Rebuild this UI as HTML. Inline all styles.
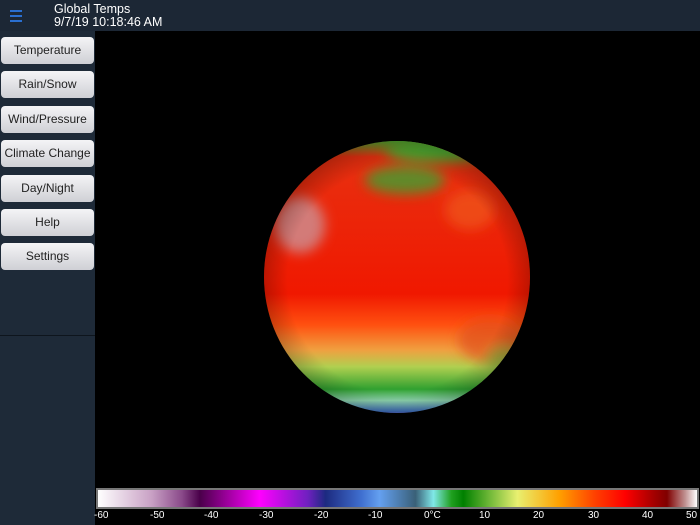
<!DOCTYPE html>
<html><head><style>
*{margin:0;padding:0;box-sizing:border-box}
body{width:700px;height:525px;background:#000;position:relative;overflow:hidden;font-family:"Liberation Sans",sans-serif}
#hdr{position:absolute;left:0;top:0;width:700px;height:31px;background:#1c2735}
#hdr .t{position:absolute;left:54px;color:#fff;font-size:12.5px;line-height:13px}
#side{position:absolute;left:0;top:31px;width:95px;height:494px;background:#1e2a38}
#side .ln{position:absolute;left:0;top:304px;width:95px;height:1px;background:#0e151d}
.b{position:absolute;left:1px;width:93px;height:27px;border-radius:4px;background:linear-gradient(#f4f4f6,#cfd0d5);color:#222;font-size:12px;text-align:center;line-height:27px;white-space:nowrap}
.ham{position:absolute;left:10px;width:12px;height:1.5px;background:#2a6fd0}
#bar{position:absolute;left:96px;top:488px;width:603px;height:21px;border:2px solid #777;background:linear-gradient(90deg,#fff 0%,#c8a0c4 9%,#8a4a8a 14%,#4a004a 17%,#ff00ff 27%,#7020c0 35%,#1c2a80 38%,#4070d0 44%,#64a0f0 47%,#3a6078 53%,#80e8e8 56%,#20a020 59%,#008000 61%,#80c040 66%,#e8f070 70%,#ffa000 77%,#ff4000 83%,#ff0000 88%,#a00000 93%,#800000 95%,#c09090 98%,#fff 100%)}
.l{position:absolute;top:510px;color:#fff;font-size:10px}
</style></head><body>
<div id="hdr">
<div class="ham" style="top:10px"></div><div class="ham" style="top:15px"></div><div class="ham" style="top:20px"></div>
<div class="t" style="top:3px">Global Temps</div>
<div class="t" style="top:16px">9/7/19 10:18:46 AM</div>
</div>
<div id="side"><div class="ln"></div></div>
<div class="b" style="top:37px">Temperature</div>
<div class="b" style="top:71px">Rain/Snow</div>
<div class="b" style="top:106px">Wind/Pressure</div>
<div class="b" style="top:140px">Climate Change</div>
<div class="b" style="top:175px">Day/Night</div>
<div class="b" style="top:209px">Help</div>
<div class="b" style="top:243px">Settings</div>
<svg style="position:absolute;left:0;top:0" width="700" height="525">
<defs>
<clipPath id="c"><ellipse cx="397" cy="277" rx="133" ry="136"/></clipPath>
<filter id="bl"><feGaussianBlur stdDeviation="6"/></filter>
<linearGradient id="v" x1="0" y1="0" x2="0" y2="1">
<stop offset="0" stop-color="#50b030"/><stop offset="0.06" stop-color="#e83010"/>
<stop offset="0.55" stop-color="#f01800"/><stop offset="0.66" stop-color="#ff5010"/>
<stop offset="0.75" stop-color="#f0a040"/><stop offset="0.81" stop-color="#b0d050"/>
<stop offset="0.89" stop-color="#30a030"/><stop offset="0.93" stop-color="#90d8b0"/>
<stop offset="0.97" stop-color="#4070c0"/><stop offset="1" stop-color="#b030c0"/>
</linearGradient>
<radialGradient id="s" cx="0.5" cy="0.5" r="0.5"><stop offset="0.8" stop-color="#000" stop-opacity="0"/><stop offset="1" stop-color="#000" stop-opacity="0.25"/></radialGradient>
</defs>
<g clip-path="url(#c)">
<rect x="260" y="140" width="275" height="280" fill="url(#v)"/>
<g filter="url(#bl)">
<ellipse cx="405" cy="180" rx="40" ry="14" fill="#40a030" opacity="0.8"/>
<ellipse cx="300" cy="225" rx="25" ry="28" fill="#c8a0a8" opacity="0.7"/>
<ellipse cx="440" cy="150" rx="55" ry="12" fill="#50b030"/>
<ellipse cx="490" cy="340" rx="32" ry="22" fill="#e05020" opacity="0.7"/>
<ellipse cx="505" cy="360" rx="18" ry="14" fill="#80c040" opacity="0.6"/>
<ellipse cx="470" cy="210" rx="25" ry="20" fill="#f06020" opacity="0.6"/>
</g>
<rect x="260" y="140" width="275" height="280" fill="url(#s)"/>
</g>
</svg>
<div id="bar"></div>
<div class="l" style="left:94px">-60</div><div class="l" style="left:150px">-50</div><div class="l" style="left:204px">-40</div><div class="l" style="left:259px">-30</div><div class="l" style="left:314px">-20</div><div class="l" style="left:368px">-10</div><div class="l" style="left:424px">0°C</div><div class="l" style="left:479px">10</div><div class="l" style="left:533px">20</div><div class="l" style="left:588px">30</div><div class="l" style="left:642px">40</div><div class="l" style="left:686px">50</div>
</body></html>
